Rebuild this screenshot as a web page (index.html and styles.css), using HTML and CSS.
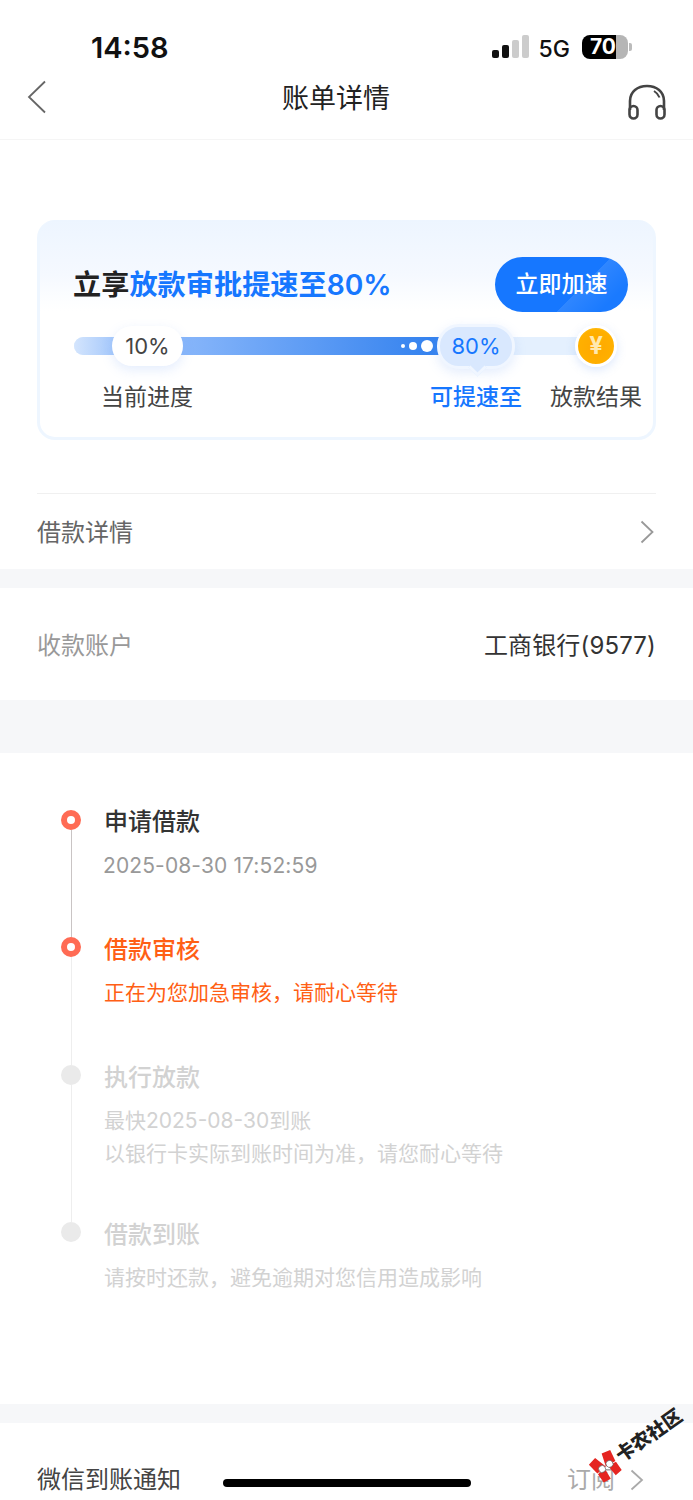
FILE: index.html
```html
<!DOCTYPE html>
<html lang="zh-CN">
<head>
    <meta charset="UTF-8">
    <meta name="viewport" content="width=device-width, initial-scale=1.0">
    <title>账单详情</title>
    <link rel="stylesheet" href="styles.css">
</head>
<body>
    <div id="page">
        <div class="status-bar">
            <span class="status-time">14:58</span>
            <div class="status-right">
                <div class="signal">
                    <i class="on s1"></i><i class="on s2"></i><i class="s3"></i><i class="s4"></i>
                </div>
                <span class="status-net">5G</span>
                <div class="battery"><span class="battery-num">70</span></div>
                <div class="battery-nub"></div>
            </div>
        </div>

        <div class="nav-bar">
            <svg class="nav-back" width="20" height="34" viewBox="0 0 20 34"><path d="M18 1.500 2 17l16 15.500" fill="none" stroke="#666" stroke-width="1.800"/></svg>
            <div class="nav-title">账单详情</div>
            <svg class="nav-service" width="40" height="36" viewBox="0 0 40 36" fill="none" stroke="#444" stroke-width="2.600">
                <path d="M3 26V17C3 7.500 10.500 2 20 2s17 5.500 17 15v9"/>
                <rect x="2.500" y="22" width="8" height="12.500" rx="4"/>
                <rect x="29.500" y="22" width="8" height="12.500" rx="4"/>
                <path d="M27 7c2.500 1.500 4.500 3.700 5.500 6.500" stroke-width="2"/>
            </svg>
        </div>

        <div class="section-top">
            <div class="boost-card">
                <div class="boost-head">
                    <div class="boost-title">立享<span class="blue">放款审批提速至80%</span></div>
                    <div class="boost-btn">立即加速</div>
                </div>
                <div class="progress">
                    <div class="progress-fill"></div>
                    <i class="spark sp1"></i><i class="spark sp2"></i><i class="spark sp3"></i>
                    <div class="pill-now">10%</div>
                    <div class="pill-target">80%</div>
                    <div class="coin"><span>¥</span></div>
                </div>
                <div class="progress-labels">
                    <span class="label-now">当前进度</span>
                    <span class="label-target">可提速至</span>
                    <span class="label-end">放款结果</span>
                </div>
            </div>
            <div class="detail-row">
                <span>借款详情</span>
                <svg width="14" height="24" viewBox="0 0 14 24"><path d="M1.500 1.500 12.500 12 1.500 22.500" fill="none" stroke="#999" stroke-width="1.800"/></svg>
            </div>
        </div>

        <div class="gap gap-s"></div>

        <div class="account-row">
            <span class="account-label">收款账户</span>
            <span class="account-value">工商银行(9577)</span>
        </div>

        <div class="gap gap-l"></div>

        <div class="timeline">
            <div class="step step-done">
                <div class="rail"><i class="dot"></i><i class="line"></i></div>
                <div class="step-body">
                    <div class="step-title">申请借款</div>
                    <div class="step-sub">2025-08-30 17:52:59</div>
                </div>
            </div>
            <div class="step step-active">
                <div class="rail"><i class="dot"></i><i class="line"></i></div>
                <div class="step-body">
                    <div class="step-title">借款审核</div>
                    <div class="step-sub">正在为您加急审核，请耐心等待</div>
                </div>
            </div>
            <div class="step step-todo step-long">
                <div class="rail"><i class="dot"></i><i class="line"></i></div>
                <div class="step-body">
                    <div class="step-title">执行放款</div>
                    <div class="step-sub">最快2025-08-30到账<br>以银行卡实际到账时间为准，请您耐心等待</div>
                </div>
            </div>
            <div class="step step-todo step-last">
                <div class="rail"><i class="dot"></i></div>
                <div class="step-body">
                    <div class="step-title">借款到账</div>
                    <div class="step-sub">请按时还款，避免逾期对您信用造成影响</div>
                </div>
            </div>
        </div>

        <div class="gap gap-s"></div>

        <div class="notify-row">
            <span class="notify-label">微信到账通知</span>
            <div class="notify-action">
                <span>订阅</span>
                <svg width="14" height="22" viewBox="0 0 14 22"><path d="M1.500 1.500 12 11 1.500 20.500" fill="none" stroke="#aaa" stroke-width="1.800"/></svg>
            </div>
        </div>

        <div class="home-bar"></div>

        <div class="watermark">
            <svg width="28" height="28" viewBox="0 0 28 28">
                <path d="M1 3l9-2 4 13-11 1zM27 3l-9-2-4 13 11 1zM3 16l9-1-1 12-8-1zM25 16l-9-1 1 12 8-1z" fill="#e52521"/>
                <circle cx="9.500" cy="14" r="3.500" fill="#fff" stroke="#555" stroke-width=".6"/>
                <circle cx="18.500" cy="14" r="3.500" fill="#fff" stroke="#555" stroke-width=".6"/>
            </svg>
            <span>卡农社区</span>
        </div>
    </div>
</body>
</html>
```

FILE: styles.css
```css
* {
    box-sizing: border-box;
}

body {
    margin: 0;
    background: #fff;
    font-family: Inter, "Noto Sans CJK SC", sans-serif;
    color: #333;
}

#page {
    position: relative;
    width: 693px;
    height: 1500px;
    overflow: hidden;
    background: #fff;
}

/* Status bar */
.status-bar {
    height: 72px;
    padding: 31px 0 0 91px;
    display: flex;
    justify-content: space-between;
}

.status-time {
    font-size: 29px;
    line-height: 34px;
    font-weight: 600;
    color: #111;
}

.status-right {
    display: flex;
    align-items: flex-start;
    padding: 3px 61px 0 0;
}

.signal {
    display: flex;
    align-items: flex-end;
    gap: 3px;
    height: 23px;
    margin-top: 1px;
}

.signal i {
    width: 7px;
    border-radius: 2px;
    background: #ccc;
}

.signal .on {
    background: #111;
}

.s1 { height: 8px; }
.s2 { height: 13px; }
.s3 { height: 18px; }
.s4 { height: 23px; }

.status-net {
    margin-left: 10px;
    font-size: 23px;
    line-height: 30px;
    font-weight: 500;
    color: #111;
}

.battery {
    width: 46px;
    height: 24px;
    margin-left: 12px;
    margin-top: 1px;
    border-radius: 8px;
    background: linear-gradient(90deg, #000 73%, #b5b5b5 73%);
    text-align: center;
}

.battery-num {
    display: block;
    width: 42px;
    font-size: 21px;
    line-height: 24px;
    font-weight: 700;
    color: #fff;
}

.battery-nub {
    width: 3px;
    height: 8px;
    margin: 9px 0 0 1px;
    border-radius: 0 2px 2px 0;
    background: #bbb;
}

/* Nav */
.nav-bar {
    height: 68px;
    padding: 0 26px 0 27px;
    display: flex;
    align-items: center;
    justify-content: space-between;
    border-bottom: 1px solid #f5f5f5;
}

.nav-back {
    margin-top: -18px;
}

.nav-title {
    margin: -14px 0 0 -2px;
    font-size: 27px;
    line-height: 36px;
    color: #222;
}

.nav-service {
    margin-top: -8px;
}

/* Boost card */
.section-top {
    padding: 80px 37px 0;
}

.boost-card {
    height: 220px;
    padding: 35px 25px 0 34px;
    border: 3px solid #eef6ff;
    border-top: 0;
    border-radius: 18px;
    background: linear-gradient(180deg, #edf5ff 0, #f5f9ff 25%, #fdfeff 38%, #fff 42%);
}

.boost-head {
    display: flex;
    justify-content: space-between;
    align-items: center;
    height: 58px;
}

.boost-title {
    margin: 2px 0 0 -1px;
    font-size: 28.2px;
    line-height: 36px;
    font-weight: 700;
    color: #222;
}

.blue {
    font-weight: 600;
    color: #1677ff;
}

.boost-btn {
    width: 133px;
    height: 55px;
    border-radius: 28px;
    background: linear-gradient(135deg, #1677ff 0, #1677ff 62%, #2f86ff 62%, #1a7aff 85%);
    font-size: 23px;
    line-height: 55px;
    font-weight: 500;
    text-align: center;
    color: #fff;
}

.progress {
    position: relative;
    width: 522px;
    height: 18px;
    margin-top: 24px;
    border-radius: 9px;
    background: #e4f0fe;
}

.progress-fill {
    width: 375px;
    height: 18px;
    border-radius: 9px 0 0 9px;
    background: linear-gradient(90deg, #d4e5fd 0, #a8cafb 10%, #86b5fa 30%, #2f7fee 100%);
}

.spark {
    position: absolute;
    border-radius: 50%;
    background: #fff;
}

.sp1 { left: 327px; top: 7px; width: 4px; height: 4px; }
.sp2 { left: 335px; top: 5px; width: 8px; height: 8px; }
.sp3 { left: 347px; top: 3px; width: 12px; height: 12px; }

.pill-now {
    position: absolute;
    left: 38px;
    top: -11px;
    width: 71px;
    height: 40px;
    border-radius: 20px;
    background: #fff;
    box-shadow: 0 4px 12px rgba(120, 165, 245, 0.2);
    font-size: 22px;
    line-height: 40px;
    text-align: center;
    color: #444;
}

.pill-target {
    position: absolute;
    left: 363px;
    top: -13px;
    width: 78px;
    height: 45px;
    border: 3px solid #f0f6ff;
    border-radius: 22px;
    background: #d9e8fe;
    box-shadow: 0 4px 12px rgba(120, 165, 245, 0.2);
    font-size: 22px;
    line-height: 39px;
    text-align: center;
    color: #1677ff;
}

/* little tail under the bubble */
.pill-target::after {
    content: "";
    position: absolute;
    left: 31px;
    top: 34px;
    width: 10px;
    height: 10px;
    transform: rotate(45deg);
    background: #d9e8fe;
    border-right: 3px solid #f0f6ff;
    border-bottom: 3px solid #f0f6ff;
}

.coin {
    position: absolute;
    left: 501px;
    top: -12px;
    width: 42px;
    height: 42px;
    border: 3px solid #fff;
    border-radius: 50%;
    background: radial-gradient(circle at 50% 55%, #ffa800 0, #ffb000 66%, #ffdc3c 100%);
    box-shadow: 0 3px 10px rgba(120, 165, 245, 0.25);
    font-size: 24px;
    line-height: 35px;
    font-weight: 700;
    text-align: center;
    color: #ffe9b0;
}

.progress-labels {
    display: flex;
    margin-top: 24px;
    padding-left: 27px;
    font-size: 23px;
    line-height: 36px;
    color: #444;
}

.label-target {
    margin-left: auto;
    font-weight: 500;
    color: #1677ff;
}

.label-end {
    margin-left: 28px;
    margin-right: -14px;
}

.detail-row {
    height: 76px;
    margin-top: 53px;
    padding-bottom: 2px;
    display: flex;
    align-items: center;
    justify-content: space-between;
    border-top: 1px solid #f0f0f0;
    font-size: 24px;
    color: #666;
}

.detail-row svg {
    margin: 2px 2px 0 0;
}

/* Bands between the sections */
.gap {
    background: #f6f7f9;
}

.gap-s {
    height: 19px;
}

.gap-l {
    height: 53px;
}

.account-row {
    height: 112px;
    padding: 0 37px 2px;
    display: flex;
    align-items: center;
    justify-content: space-between;
    font-size: 24px;
}

.account-label {
    color: #999;
}

.account-value {
    letter-spacing: 0.15px;
    color: #333;
}

/* Timeline */
.timeline {
    height: 651px;
    padding: 57px 0 0 61px;
}

.step {
    display: flex;
    gap: 23px;
}

.rail {
    width: 20px;
    display: flex;
    flex-direction: column;
    align-items: center;
}

.dot {
    width: 20px;
    height: 20px;
    flex: none;
    border-radius: 50%;
}

.step-done .dot,
.step-active .dot {
    border: 6px solid #ff6b54;
    background: #fff;
}

.step-todo .dot {
    background: #eaeaea;
}

.line {
    flex: 1;
    width: 1px;
    background: #eeeeee;
}

.step-done .line {
    background: #c9c4c4;
}

.step-body {
    padding-bottom: 56px;
}

.step-done .step-body {
    padding-bottom: 55px;
}

.step-long .step-body {
    padding-bottom: 52px;
}

.step-last .step-body {
    padding-bottom: 0;
}

.step-title {
    font-size: 24px;
    line-height: 24px;
    font-weight: 500;
}

.step-active .step-title,
.step-todo .step-title {
    margin-top: 1px;
}

.step-sub {
    margin-top: 14px;
    font-size: 21px;
    line-height: 33px;
}

.step-done .step-sub {
    margin: 15px 0 0 -1px;
    letter-spacing: 0.12px;
    color: #999;
}

.step-done .step-title {
    color: #333;
}

.step-active .step-title,
.step-active .step-sub {
    color: #ff5f15;
}

.step-todo .step-title,
.step-todo .step-sub {
    color: #d2d2d2;
}

/* Bottom row */
.notify-row {
    height: 77px;
    padding: 39px 49px 0 37px;
    display: flex;
    justify-content: space-between;
    font-size: 24px;
    line-height: 36px;
}

.notify-label {
    color: #444;
}

.notify-action {
    display: flex;
    align-items: center;
    gap: 15px;
    height: 36px;
    color: #aaa;
}

.home-bar {
    position: absolute;
    left: 223px;
    top: 1479px;
    width: 248px;
    height: 8px;
    border-radius: 4px;
    background: #000;
}

.watermark {
    position: absolute;
    left: 592px;
    top: 1453px;
    display: flex;
    align-items: center;
    gap: 1px;
    transform: rotate(-35deg);
    transform-origin: 13px 14px;
    font-size: 19px;
    line-height: 28px;
    font-weight: 900;
    white-space: nowrap;
    color: #222;
}
```
